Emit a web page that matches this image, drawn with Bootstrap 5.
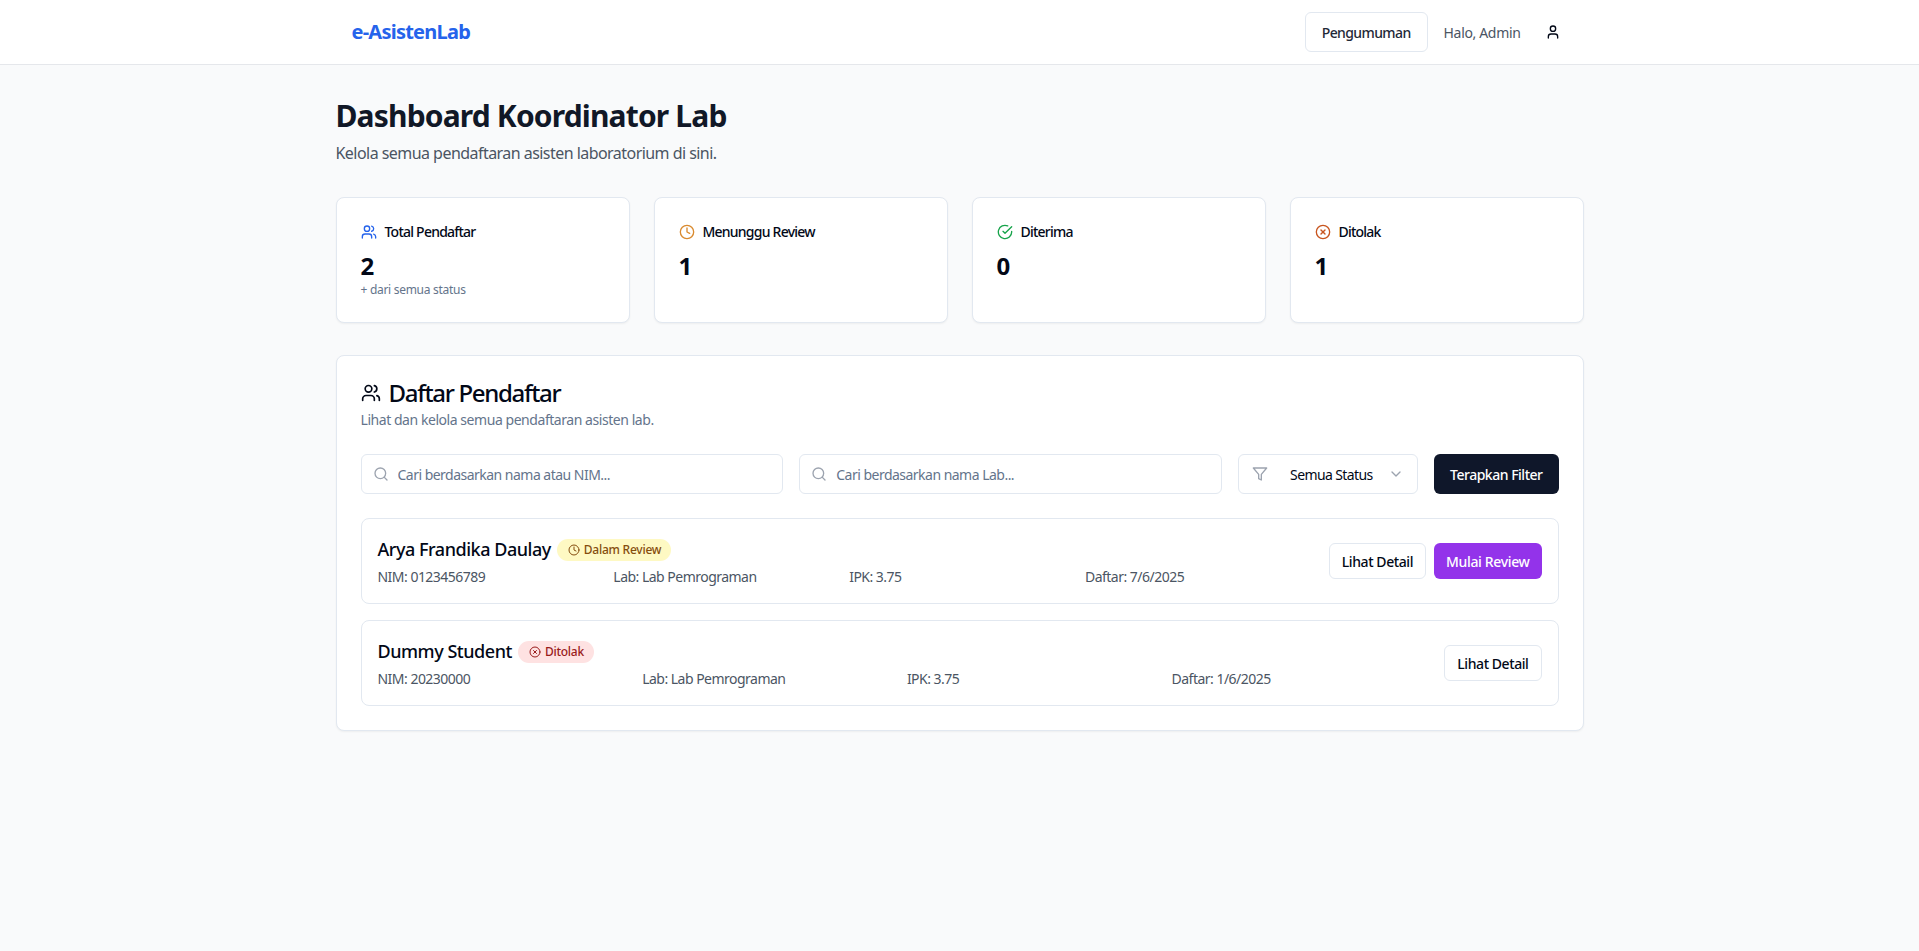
<!DOCTYPE html>
<html lang="id">
<head>
  <meta charset="UTF-8" />
  <meta name="viewport" content="width=device-width, initial-scale=1.0"/>
  <title>Dashboard Koordinator Lab - e-AsistenLab</title>
  <link href="https://cdn.jsdelivr.net/npm/bootstrap@5.3.0/dist/css/bootstrap.min.css" rel="stylesheet" />
  <style>
    body { font-family: "Noto Sans", "Liberation Sans", sans-serif; background: #f9fafb; color: #020817; font-size: 14px; letter-spacing: -.035em; min-height: 951px; }
    svg.ico { width: 16px; height: 16px; fill: none; stroke: currentColor; stroke-width: 2; stroke-linecap: round; stroke-linejoin: round; flex: none; }
    svg.ico-12 { width: 12px; height: 12px; }
    svg.ico-20 { width: 20px; height: 20px; }

    .page-wrap { width: 1248px; margin: 0 auto; }
    .top-nav { height: 65px; padding: 0; border-bottom: 1px solid #e5e7eb; }
    .top-nav .page-wrap { padding: 0 15px 0 16px; display: flex; align-items: center; justify-content: space-between; }
    .brand-name { font-size: 20px; font-weight: 700; letter-spacing: -.038em; color: #2563eb; text-decoration: none; line-height: 28px; }
    .btn-announce { height: 40px; padding: 0 16px; font-size: 14px; font-weight: 500; letter-spacing: -.043em; color: #1f2937; background: #fff; border: 1px solid #e2e8f0; border-radius: 6px; }
    .hello-text { color: #4b5563; font-size: 14px; letter-spacing: -.024em; }
    .btn-user { width: 32px; height: 40px; padding: 0; border: 0; color: #020817; background: transparent; }

    .page-title { font-size: 30px; line-height: 36px; font-weight: 700; letter-spacing: -.028em; color: #111827; padding-top: 1px; margin-bottom: 7px; }
    .page-sub { font-size: 16px; line-height: 24px; color: #4b5563; letter-spacing: -.034em; margin-bottom: 32px; }

    .panel-card { border: 1px solid #e2e8f0; border-radius: 8px; box-shadow: 0 1px 2px rgba(0,0,0,.05); background: #fff; }
    .stat-body { padding: 24px; height: 124px; }
    .stat-label { font-size: 14px; line-height: 20px; font-weight: 500; letter-spacing: -.055em; margin-bottom: 8px; }
    .stat-value { font-size: 24px; line-height: 32px; font-weight: 700; margin-top: 4px; }
    .stat-note { font-size: 12px; line-height: 16px; color: #64748b; letter-spacing: -.024em; }
    .c-blue { color: #2563eb; } .c-amber { color: #d98a2f; } .c-green { color: #16a34a; } .c-red { color: #c8551f; }

    .list-panel { margin-top: 32px; }
    .list-title { font-size: 24px; line-height: 24px; font-weight: 500; letter-spacing: -.055em; padding-top: 1px; margin-bottom: 5px; }
    .list-sub { font-size: 14px; line-height: 20px; color: #64748b; letter-spacing: -.032em; margin-bottom: 24px; }

    .search-box { flex: 1 1 0; }
    .search-box svg { position: absolute; left: 12px; top: 12px; color: #9ca3af; }
    .search-box .form-control { height: 40px; padding: 0 12px 0 36px; font-size: 14px; letter-spacing: -.037em; border-color: #e2e8f0; border-radius: 6px; }
    .search-box .form-control::placeholder { color: #64748b; }
    .status-select { width: 180px; height: 40px; padding: 0 13px; font-size: 14px; letter-spacing: -.043em; color: #020817; background: #fff; border: 1px solid #e2e8f0; border-radius: 6px; }
    .status-select svg { color: #9ca3af; }
    .filter-ico { margin-right: 22px; }
    .btn-apply { height: 40px; padding: 0 16px; font-size: 14px; font-weight: 500; letter-spacing: -.035em; color: #fff; background: #0f172a; border: 0; border-radius: 6px; }

    .applicant-row { padding: 16px; border: 1px solid #e2e8f0; border-radius: 8px; }
    .name-line { gap: 6px; }
    .applicant-name { font-size: 18px; line-height: 28px; font-weight: 500; letter-spacing: -.026em; margin: 0; }
    .status-pill { display: inline-flex; align-items: center; gap: 4px; height: 22px; margin-top: 2px; padding: 0 10px 0 11px; border-radius: 999px; font-size: 12px; font-weight: 500; letter-spacing: -.02em; }
    .pill-review { background: #fef9c3; color: #854d0e; }
    .pill-reject { background: #fee2e2; color: #991b1b; }
    .meta-grid { display: grid; grid-template-columns: repeat(4, 1fr); gap: 16px; margin-top: 4px; font-size: 14px; line-height: 20px; letter-spacing: -.037em; color: #4b5563; }
    .btn-detail { height: 36px; padding: 0 12px; font-size: 14px; font-weight: 500; letter-spacing: -.03em; color: #020817; background: #fff; border: 1px solid #e2e8f0; border-radius: 6px; }
    .btn-review { height: 36px; padding: 0 12px; font-size: 14px; font-weight: 500; letter-spacing: -.025em; color: #fff; background: #9333ea; border: 0; border-radius: 6px; }
  </style>
</head>
<body>
  <svg class="d-none">
    <symbol id="i-users" viewBox="0 0 24 24"><path d="M16 21v-2a4 4 0 0 0-4-4H6a4 4 0 0 0-4 4v2"/><circle cx="9" cy="7" r="4"/><path d="M22 21v-2a4 4 0 0 0-3-3.87"/><path d="M16 3.13a4 4 0 0 1 0 7.75"/></symbol>
    <symbol id="i-clock" viewBox="0 0 24 24"><circle cx="12" cy="12" r="10"/><polyline points="12 6 12 12 16 14"/></symbol>
    <symbol id="i-check" viewBox="0 0 24 24"><path d="M22 11.08V12a10 10 0 1 1-5.93-9.14"/><polyline points="22 4 12 14.01 9 11.01"/></symbol>
    <symbol id="i-x" viewBox="0 0 24 24"><circle cx="12" cy="12" r="10"/><path d="m15 9-6 6"/><path d="m9 9 6 6"/></symbol>
    <symbol id="i-user" viewBox="0 0 24 24"><path d="M19 21v-2a4 4 0 0 0-4-4H9a4 4 0 0 0-4 4v2"/><circle cx="12" cy="7" r="4"/></symbol>
    <symbol id="i-search" viewBox="0 0 24 24"><circle cx="11" cy="11" r="8"/><path d="m21 21-4.3-4.3"/></symbol>
    <symbol id="i-filter" viewBox="0 0 24 24"><polygon points="22 3 2 3 10 12.46 10 19 14 21 14 12.46 22 3"/></symbol>
    <symbol id="i-chevron" viewBox="0 0 24 24"><path d="m6 9 6 6 6-6"/></symbol>
  </svg>

  <nav class="navbar top-nav bg-white">
    <div class="page-wrap">
      <a class="brand-name" href="#">e-AsistenLab</a>
      <div class="d-flex align-items-center gap-3">
        <button class="btn-announce" type="button">Pengumuman</button>
        <span class="hello-text">Halo, Admin</span>
        <button class="btn-user d-flex align-items-center justify-content-center" type="button" aria-label="Profil">
          <svg class="ico"><use href="#i-user"/></svg>
        </button>
      </div>
    </div>
  </nav>

  <main class="page-wrap pt-4 mt-2">
    <h1 class="page-title">Dashboard Koordinator Lab</h1>
    <p class="page-sub">Kelola semua pendaftaran asisten laboratorium di sini.</p>

    <div class="row g-4 mb-0">
      <div class="col-3">
        <div class="card panel-card">
          <div class="stat-body">
            <div class="stat-label d-flex align-items-center gap-2"><svg class="ico c-blue"><use href="#i-users"/></svg>Total Pendaftar</div>
            <div class="stat-value">2</div>
            <div class="stat-note">+ dari semua status</div>
          </div>
        </div>
      </div>
      <div class="col-3">
        <div class="card panel-card">
          <div class="stat-body">
            <div class="stat-label d-flex align-items-center gap-2"><svg class="ico c-amber"><use href="#i-clock"/></svg>Menunggu Review</div>
            <div class="stat-value">1</div>
          </div>
        </div>
      </div>
      <div class="col-3">
        <div class="card panel-card">
          <div class="stat-body">
            <div class="stat-label d-flex align-items-center gap-2"><svg class="ico c-green"><use href="#i-check"/></svg>Diterima</div>
            <div class="stat-value">0</div>
          </div>
        </div>
      </div>
      <div class="col-3">
        <div class="card panel-card">
          <div class="stat-body">
            <div class="stat-label d-flex align-items-center gap-2"><svg class="ico c-red"><use href="#i-x"/></svg>Ditolak</div>
            <div class="stat-value">1</div>
          </div>
        </div>
      </div>
    </div>

    <div class="card panel-card list-panel">
      <div class="p-4">
        <h2 class="list-title d-flex align-items-center gap-2"><svg class="ico ico-20"><use href="#i-users"/></svg>Daftar Pendaftar</h2>
        <p class="list-sub">Lihat dan kelola semua pendaftaran asisten lab.</p>

        <div class="d-flex gap-3 mb-4">
          <div class="search-box position-relative">
            <svg class="ico"><use href="#i-search"/></svg>
            <input type="text" class="form-control" placeholder="Cari berdasarkan nama atau NIM..." />
          </div>
          <div class="search-box position-relative">
            <svg class="ico"><use href="#i-search"/></svg>
            <input type="text" class="form-control" placeholder="Cari berdasarkan nama Lab..." />
          </div>
          <button class="status-select d-flex align-items-center" type="button">
            <svg class="ico filter-ico"><use href="#i-filter"/></svg>
            <span class="flex-grow-1 text-start">Semua Status</span>
            <svg class="ico"><use href="#i-chevron"/></svg>
          </button>
          <button class="btn-apply" type="button">Terapkan Filter</button>
        </div>

        <div class="d-flex flex-column gap-3">
          <div class="applicant-row d-flex align-items-center gap-4">
            <div class="flex-grow-1">
              <div class="name-line d-flex align-items-center">
                <h3 class="applicant-name">Arya Frandika Daulay</h3>
                <span class="status-pill pill-review"><svg class="ico ico-12"><use href="#i-clock"/></svg>Dalam Review</span>
              </div>
              <div class="meta-grid">
                <span>NIM: 0123456789</span>
                <span>Lab: Lab Pemrograman</span>
                <span>IPK: 3.75</span>
                <span>Daftar: 7/6/2025</span>
              </div>
            </div>
            <div class="d-flex gap-2">
              <button class="btn-detail" type="button">Lihat Detail</button>
              <button class="btn-review" type="button">Mulai Review</button>
            </div>
          </div>

          <div class="applicant-row d-flex align-items-center gap-4">
            <div class="flex-grow-1">
              <div class="name-line d-flex align-items-center">
                <h3 class="applicant-name">Dummy Student</h3>
                <span class="status-pill pill-reject"><svg class="ico ico-12"><use href="#i-x"/></svg>Ditolak</span>
              </div>
              <div class="meta-grid">
                <span>NIM: 20230000</span>
                <span>Lab: Lab Pemrograman</span>
                <span>IPK: 3.75</span>
                <span>Daftar: 1/6/2025</span>
              </div>
            </div>
            <div class="d-flex gap-2">
              <button class="btn-detail" type="button">Lihat Detail</button>
            </div>
          </div>
        </div>
      </div>
    </div>
  </main>

  <script src="https://cdn.jsdelivr.net/npm/bootstrap@5.3.0/dist/js/bootstrap.bundle.min.js"></script>
</body>
</html>
